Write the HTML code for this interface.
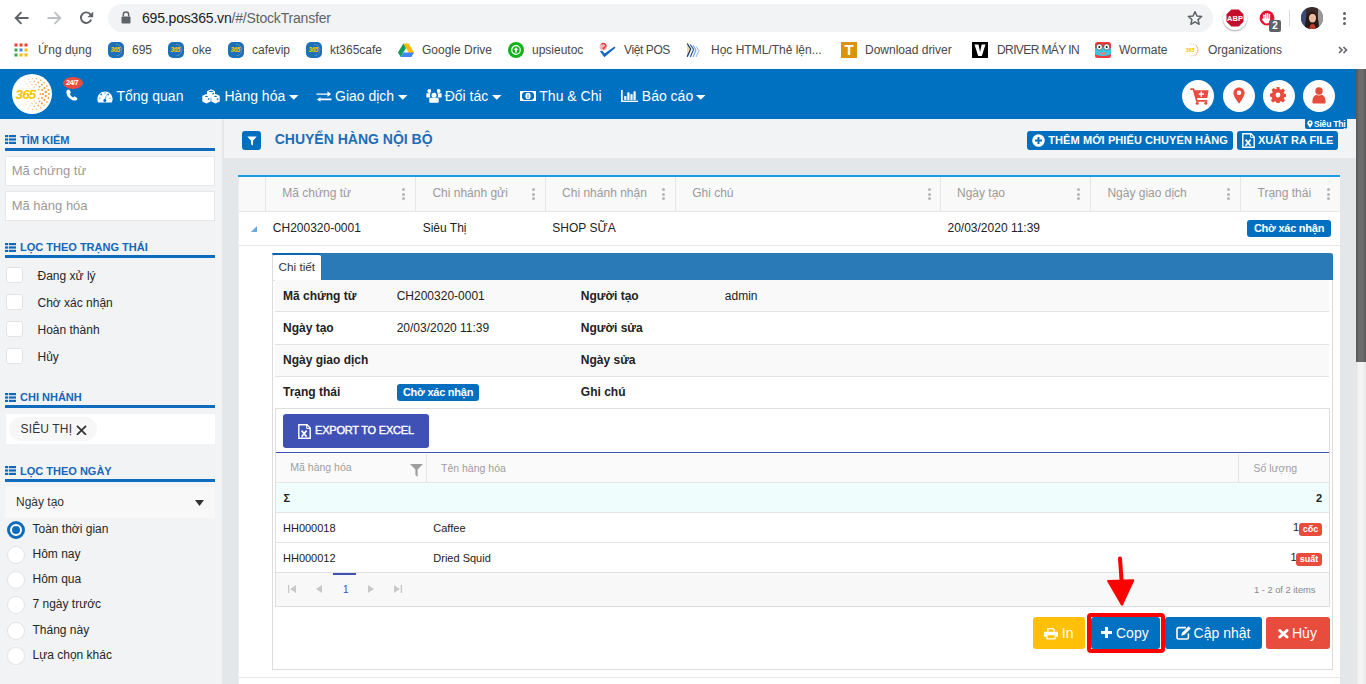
<!DOCTYPE html>
<html><head><meta charset="utf-8">
<style>
*{box-sizing:border-box;margin:0;padding:0}
html,body{width:1366px;height:684px;overflow:hidden;background:#fff;font-family:"Liberation Sans",sans-serif;color:#222}
.a{position:absolute}
.t{position:absolute;white-space:nowrap;line-height:1}
svg{display:block}
.nv{top:89px;font-size:14px;color:#fff}
.sh{left:20px;font-size:11px;font-weight:bold;color:#1567b8}
.inp{left:5px;width:210px;height:30px;background:#fff;border:1px solid #e8e8e8}
.chk{left:6px;width:17px;height:16px;border-radius:3px;background:#fff;border:1px solid #e3e3e3}
.sl{font-size:12px;color:#262626}
.keb{width:3px;height:3px;border-radius:2px;background:#b5b5b5}
.th{top:186.5px;font-size:12px;color:#9a9a9a}
.dt{font-size:12px;color:#222}
.bdg{background:#006fbf;color:#fff;font-size:11px;font-weight:bold;text-align:center;line-height:17px;border-radius:3px;white-space:nowrap;letter-spacing:-0.25px}
.lb{font-size:12px;font-weight:bold;color:#222}
.gh{font-size:10.5px;color:#9e9e9e}
.gd{font-size:11px;color:#222}
.rb{background:#e74c3c;color:#fff;font-size:9px;font-weight:bold;text-align:center;line-height:13px;border-radius:3px}
.btn{top:617px;height:32px;border-radius:3px}
.bt{top:626px;font-size:14px;color:#fff}
.bm{top:44px;font-size:12px;color:#474747}
</style></head><body>
<!-- ===== Browser chrome ===== -->
<div class="a" style="left:0;top:0;width:1366px;height:69px;background:#fff"></div>
<!-- back -->
<svg class="a" style="left:14px;top:11px" width="15" height="14" viewBox="0 0 15 14"><path d="M14.5 7H2M7.5 1.2L1.7 7l5.8 5.8" fill="none" stroke="#5f6368" stroke-width="1.9"/></svg>
<!-- fwd -->
<svg class="a" style="left:47px;top:11px" width="15" height="14" viewBox="0 0 15 14"><path d="M0.5 7H13M7.5 1.2L13.3 7l-5.8 5.8" fill="none" stroke="#bdc1c6" stroke-width="1.9"/></svg>
<!-- reload -->
<svg class="a" style="left:79px;top:11px" width="15" height="14" viewBox="0 0 15 14"><path d="M12.2 8.6A5.3 5.3 0 1 1 11.6 3.6" fill="none" stroke="#5f6368" stroke-width="1.9"/><path d="M14.2 0.5v5.8H8.4z" fill="#5f6368"/></svg>
<div class="a" style="left:108px;top:4px;width:1105px;height:28px;border-radius:14px;background:#f1f3f4"></div>
<!-- lock -->
<svg class="a" style="left:121px;top:11px" width="10" height="13" viewBox="0 0 10 13"><path d="M2.3 5.5V3.8a2.7 2.7 0 0 1 5.4 0v1.7" fill="none" stroke="#5f6368" stroke-width="1.5"/><rect x="0.5" y="5.5" width="9" height="7" rx="1" fill="#5f6368"/></svg>
<div class="t" style="left:142px;top:11px;font-size:14px;letter-spacing:-0.18px;color:#202124">695.pos365.vn<span style="color:#5f6368">/#/StockTransfer</span></div>
<!-- star -->
<svg class="a" style="left:1187px;top:10px" width="16" height="16" viewBox="0 0 24 24"><path d="M12 2.5l2.9 6.6 7.1.6-5.4 4.7 1.6 7-6.2-3.7-6.2 3.7 1.6-7L2 9.7l7.1-.6z" fill="none" stroke="#5f6368" stroke-width="2.2" stroke-linejoin="round"/></svg>
<!-- ABP -->
<div class="a" style="left:1223px;top:6px;width:24px;height:24px;border-radius:12px;background:#fff;box-shadow:0 1px 2px rgba(0,0,0,.35)"></div>
<svg class="a" style="left:1226px;top:9px" width="18" height="18" viewBox="0 0 18 18"><path d="M5.3 0.5h7.4l4.8 4.8v7.4l-4.8 4.8H5.3L0.5 12.7V5.3z" fill="#c70d2c"/><text x="9" y="12.3" font-family="Liberation Sans" font-weight="bold" font-size="7.5" fill="#fff" text-anchor="middle">ABP</text></svg>
<!-- hand ext -->
<svg class="a" style="left:1259px;top:10px" width="16" height="16" viewBox="0 0 16 16"><circle cx="8" cy="8" r="7.4" fill="#e8112d"/><g fill="#fff"><rect x="4.2" y="4.6" width="1.5" height="5" rx=".75"/><rect x="6" y="3.2" width="1.5" height="6" rx=".75"/><rect x="7.8" y="3" width="1.5" height="6" rx=".75"/><rect x="9.6" y="3.8" width="1.5" height="5.5" rx=".75"/><path d="M4.2 8.5h6.9v1.8c0 1.9-1.4 3.3-3.3 3.3-1.3 0-2.1-.6-2.8-1.6L3.3 9.9c-.4-.6-.2-1.2.3-1.4z"/></g></svg>
<div class="a" style="left:1269px;top:20px;width:12px;height:12px;border-radius:2px;background:#5f6368;color:#fff;font-size:10px;font-weight:bold;line-height:12px;text-align:center">2</div>
<div class="a" style="left:1289px;top:10px;width:1px;height:16px;background:#dadce0"></div>
<!-- avatar -->
<svg class="a" style="left:1301px;top:7px" width="22" height="22" viewBox="0 0 22 22"><defs><clipPath id="av"><circle cx="11" cy="11" r="11"/></clipPath></defs><g clip-path="url(#av)"><rect width="22" height="22" fill="#3a2a2a"/><rect x="0" y="0" width="5" height="22" fill="#3c4a7a"/><rect x="17" y="0" width="5" height="22" fill="#9a9a9a"/><path d="M4 22c0-9 2-17 7-17s7 8 7 17z" fill="#2a1812"/><ellipse cx="11.5" cy="11" rx="3.6" ry="4.6" fill="#e9b9a0"/><path d="M8 22c.5-3 1.5-5 3.5-5s3 2 3.5 5z" fill="#c0392b"/><path d="M7.5 9c.5-3 2-4.5 4-4.5s3.5 1.5 4 4.5c-1-1.5-2.5-2.2-4-2.2s-3 .7-4 2.2z" fill="#2a1812"/></g></svg>
<!-- kebab -->
<div class="a" style="left:1343px;top:12px;width:3px;height:3px;border-radius:2px;background:#5f6368"></div>
<div class="a" style="left:1343px;top:17px;width:3px;height:3px;border-radius:2px;background:#5f6368"></div>
<div class="a" style="left:1343px;top:22px;width:3px;height:3px;border-radius:2px;background:#5f6368"></div>

<!-- bookmarks -->
<svg class="a" style="left:14px;top:43px" width="14" height="14" viewBox="0 0 14 14">
<rect x="0.5" y="0.5" width="3" height="3" fill="#ea4335"/><rect x="5.5" y="0.5" width="3" height="3" fill="#ea4335"/><rect x="10.5" y="0.5" width="3" height="3" fill="#ea4335"/>
<rect x="0.5" y="5.5" width="3" height="3" fill="#34a853"/><rect x="5.5" y="5.5" width="3" height="3" fill="#4285f4"/><rect x="10.5" y="5.5" width="3" height="3" fill="#fbbc05"/>
<rect x="0.5" y="10.5" width="3" height="3" fill="#34a853"/><rect x="5.5" y="10.5" width="3" height="3" fill="#fbbc05"/><rect x="10.5" y="10.5" width="3" height="3" fill="#fbbc05"/></svg>
<div class="t bm" style="left:38px">Ứng dụng</div>
<svg class="a" style="left:108px;top:42px" width="16" height="16" viewBox="0 0 16 16"><rect width="16" height="16" rx="5" fill="#1d6fb8"/><path d="M8 2.2A5.8 5.8 0 0 1 8 13.8" fill="none" stroke="#8fb4c8" stroke-width=".8" stroke-dasharray="1 .6"/><text x="7.2" y="10.3" font-family="Liberation Sans" font-weight="bold" font-style="italic" font-size="6.5" fill="#f5c800" text-anchor="middle" letter-spacing="-.5">365</text></svg>
<div class="t bm" style="left:132px">695</div>
<svg class="a" style="left:168px;top:42px" width="16" height="16" viewBox="0 0 16 16"><rect width="16" height="16" rx="5" fill="#1d6fb8"/><path d="M8 2.2A5.8 5.8 0 0 1 8 13.8" fill="none" stroke="#8fb4c8" stroke-width=".8" stroke-dasharray="1 .6"/><text x="7.2" y="10.3" font-family="Liberation Sans" font-weight="bold" font-style="italic" font-size="6.5" fill="#f5c800" text-anchor="middle" letter-spacing="-.5">365</text></svg>
<div class="t bm" style="left:192px">oke</div>
<svg class="a" style="left:228px;top:42px" width="16" height="16" viewBox="0 0 16 16"><rect width="16" height="16" rx="5" fill="#1d6fb8"/><path d="M8 2.2A5.8 5.8 0 0 1 8 13.8" fill="none" stroke="#8fb4c8" stroke-width=".8" stroke-dasharray="1 .6"/><text x="7.2" y="10.3" font-family="Liberation Sans" font-weight="bold" font-style="italic" font-size="6.5" fill="#f5c800" text-anchor="middle" letter-spacing="-.5">365</text></svg>
<div class="t bm" style="left:252px">cafevip</div>
<svg class="a" style="left:306px;top:42px" width="16" height="16" viewBox="0 0 16 16"><rect width="16" height="16" rx="5" fill="#1d6fb8"/><path d="M8 2.2A5.8 5.8 0 0 1 8 13.8" fill="none" stroke="#8fb4c8" stroke-width=".8" stroke-dasharray="1 .6"/><text x="7.2" y="10.3" font-family="Liberation Sans" font-weight="bold" font-style="italic" font-size="6.5" fill="#f5c800" text-anchor="middle" letter-spacing="-.5">365</text></svg>
<div class="t bm" style="left:330px">kt365cafe</div>
<svg class="a" style="left:398px;top:43px" width="16" height="14" viewBox="0 0 16 14"><path d="M5.3 0.5h5.4L16 9.5l-2.7 4.5z" fill="#ffba00"/><path d="M5.3 0.5L0 9.5l2.7 4.5L8 5z" fill="#0f9d58"/><path d="M2.7 14h10.6L16 9.5H5.4z" fill="#4285f4"/></svg>
<div class="t bm" style="left:422px">Google Drive</div>
<div class="a" style="left:508px;top:42px;width:16px;height:16px;border-radius:8px;background:#13b21c"></div>
<svg class="a" style="left:511px;top:45px" width="10" height="10" viewBox="0 0 10 10"><circle cx="5" cy="5" r="4.3" fill="none" stroke="#fff" stroke-width="1.2"/><path d="M5 2.2L2.6 4.8h1.5v2.8h1.8V4.8h1.5z" fill="#fff"/></svg>
<div class="t bm" style="left:532px">upsieutoc</div>
<svg class="a" style="left:599px;top:42px" width="17" height="16" viewBox="0 0 17 16"><circle cx="4.3" cy="4.5" r="3.8" fill="#f2b8bf"/><path d="M2.5 2.2c1.2-1 3-.9 3.9.3.6.9.3 2.2-.7 2.7l-1.6.9 1.3 1.2" fill="none" stroke="#e53935" stroke-width="1.3"/><path d="M1 9.2l4.3 6 11.2-9.5-1-1.2L5.6 11.5 3 8.5z" fill="#1565c0"/></svg>
<div class="t bm" style="left:624px;letter-spacing:-0.4px">Việt POS</div>
<svg class="a" style="left:686px;top:42px" width="17" height="16" viewBox="0 0 17 16"><path d="M7 3.5l3 4.5-3 7" fill="none" stroke="#6d9fd8" stroke-width="1.1"/><path d="M4.3 2.5l3.3 5-3.3 7.5" fill="none" stroke="#2d5a9a" stroke-width="1.2"/><path d="M1.2 1.5l3.5 5.5-3.5 7.8L.8 7z" fill="#e8dcb0"/><path d="M1.2 1.5l3.5 5.5-3.5 7.8" fill="none" stroke="#22375e" stroke-width="1.3"/><path d="M10 4.5l3 4-3 6.5" fill="none" stroke="#8ab8e8" stroke-width="1"/></svg>
<div class="t bm" style="left:711px">Học HTML/Thẻ lện...</div>
<div class="a" style="left:841px;top:42px;width:16px;height:16px;background:#d9930f;color:#fff;font-weight:bold;font-size:15px;line-height:16px;text-align:center">T</div>
<div class="t bm" style="left:865px">Download driver</div>
<svg class="a" style="left:972px;top:42px" width="16" height="16" viewBox="0 0 16 16"><rect width="16" height="16" fill="#000"/><path d="M2.5 2.5h4l1.6 7.5 1.6-7.5h3.8L9.8 14H6.2z" fill="#fff"/></svg>
<div class="t bm" style="left:997px;letter-spacing:-0.6px">DRIVER MÁY IN</div>
<svg class="a" style="left:1095px;top:42px" width="16" height="16" viewBox="0 0 16 16"><rect width="16" height="16" rx="2.5" fill="#ef3b3b"/><path d="M0 6.5c2-1 5-1.5 8-1.5s6 .5 8 1.5V12c-2 1.5-5 2-8 2s-6-.5-8-2z" fill="#3cc5dc"/><circle cx="4.3" cy="5" r="3" fill="#fff" stroke="#222" stroke-width=".5"/><circle cx="11.7" cy="5" r="3" fill="#fff" stroke="#222" stroke-width=".5"/><circle cx="4.3" cy="5" r="1" fill="#111"/><circle cx="11.7" cy="5" r="1" fill="#111"/><path d="M4.5 10.5c1 1.8 2.2 2.5 3.5 2.5s2.5-.7 3.5-2.5z" fill="#f07a8a"/></svg>
<div class="t bm" style="left:1119px">Wormate</div>
<svg class="a" style="left:1184px;top:42px" width="16" height="16" viewBox="0 0 16 16"><g fill="#f4a460" opacity=".8"><circle cx="5.9" cy="2.4" r="0.40"/><circle cx="7.7" cy="2.0" r="0.48"/><circle cx="9.4" cy="2.2" r="0.57"/><circle cx="11.1" cy="2.8" r="0.65"/><circle cx="12.4" cy="4.0" r="0.72"/><circle cx="13.4" cy="5.4" r="0.77"/><circle cx="13.9" cy="7.1" r="0.80"/><circle cx="13.9" cy="8.9" r="0.80"/><circle cx="13.4" cy="10.6" r="0.77"/><circle cx="12.4" cy="12.0" r="0.72"/><circle cx="11.1" cy="13.2" r="0.65"/><circle cx="9.4" cy="13.8" r="0.57"/><circle cx="7.7" cy="14.0" r="0.48"/><circle cx="5.9" cy="13.6" r="0.40"/></g><text x="6" y="10" font-family="Liberation Sans" font-weight="bold" font-style="italic" font-size="5.5" fill="#f5c400" text-anchor="middle">365</text></svg>
<div class="t bm" style="left:1208px">Organizations</div>
<svg class="a" style="left:1338px;top:46px" width="10" height="8" viewBox="0 0 10 8"><path d="M1 1l3 3-3 3M5.5 1l3 3-3 3" fill="none" stroke="#5f6368" stroke-width="1.6"/></svg>


<!-- ===== App nav ===== -->
<div class="a" style="left:0;top:69px;width:1356px;height:50px;background:#0070c0"></div>
<!-- logo -->
<div class="a" style="left:12px;top:73.5px;width:40px;height:40px;border-radius:20px;background:#fff"></div>
<svg class="a" style="left:12px;top:73.5px" width="40" height="40" viewBox="0 0 40 40">
<g fill="#f7931e"><circle cx="12.6" cy="7.3" r="0.46" opacity="0.49"/><circle cx="16.4" cy="5.4" r="0.53" opacity="0.57"/><circle cx="20.5" cy="4.5" r="0.60" opacity="0.65"/><circle cx="24.7" cy="4.8" r="0.68" opacity="0.74"/><circle cx="28.7" cy="6.3" r="0.75" opacity="0.83"/><circle cx="32.1" cy="8.7" r="0.81" opacity="0.90"/><circle cx="34.8" cy="12.0" r="0.86" opacity="0.95"/><circle cx="36.4" cy="15.8" r="0.89" opacity="0.99"/><circle cx="37.0" cy="20.0" r="0.90" opacity="1.00"/><circle cx="36.4" cy="24.2" r="0.89" opacity="0.99"/><circle cx="34.8" cy="28.0" r="0.86" opacity="0.95"/><circle cx="32.1" cy="31.3" r="0.81" opacity="0.90"/><circle cx="28.7" cy="33.7" r="0.75" opacity="0.83"/><circle cx="24.7" cy="35.2" r="0.68" opacity="0.74"/><circle cx="20.5" cy="35.5" r="0.60" opacity="0.65"/><circle cx="16.4" cy="34.6" r="0.53" opacity="0.57"/><circle cx="12.6" cy="32.7" r="0.46" opacity="0.49"/><circle cx="14.3" cy="9.8" r="0.58" opacity="0.49"/><circle cx="18.1" cy="8.0" r="0.69" opacity="0.59"/><circle cx="22.3" cy="7.5" r="0.81" opacity="0.69"/><circle cx="26.3" cy="8.5" r="0.92" opacity="0.80"/><circle cx="29.9" cy="10.7" r="1.02" opacity="0.89"/><circle cx="32.4" cy="14.0" r="1.10" opacity="0.96"/><circle cx="33.8" cy="17.9" r="1.13" opacity="1.00"/><circle cx="33.8" cy="22.1" r="1.13" opacity="1.00"/><circle cx="32.4" cy="26.0" r="1.10" opacity="0.96"/><circle cx="29.9" cy="29.3" r="1.02" opacity="0.89"/><circle cx="26.3" cy="31.5" r="0.92" opacity="0.80"/><circle cx="22.3" cy="32.5" r="0.81" opacity="0.69"/><circle cx="18.1" cy="32.0" r="0.69" opacity="0.59"/><circle cx="14.3" cy="30.2" r="0.58" opacity="0.49"/><circle cx="16.1" cy="12.2" r="0.52" opacity="0.49"/><circle cx="19.9" cy="10.6" r="0.65" opacity="0.62"/><circle cx="24.0" cy="10.8" r="0.78" opacity="0.76"/><circle cx="27.6" cy="12.7" r="0.91" opacity="0.88"/><circle cx="30.1" cy="16.0" r="0.99" opacity="0.97"/><circle cx="31.0" cy="20.0" r="1.02" opacity="1.00"/><circle cx="30.1" cy="24.0" r="0.99" opacity="0.97"/><circle cx="27.6" cy="27.3" r="0.91" opacity="0.88"/><circle cx="24.0" cy="29.2" r="0.78" opacity="0.76"/><circle cx="19.9" cy="29.4" r="0.65" opacity="0.62"/><circle cx="16.1" cy="27.8" r="0.52" opacity="0.49"/><circle cx="17.6" cy="14.4" r="0.43" opacity="0.49"/><circle cx="22.3" cy="13.2" r="0.61" opacity="0.71"/><circle cx="26.6" cy="15.5" r="0.77" opacity="0.92"/><circle cx="28.3" cy="20.0" r="0.84" opacity="1.00"/><circle cx="26.6" cy="24.5" r="0.77" opacity="0.92"/><circle cx="22.3" cy="26.8" r="0.61" opacity="0.71"/><circle cx="17.6" cy="25.6" r="0.43" opacity="0.49"/></g>
<text x="13.5" y="25" font-family="Liberation Sans" font-weight="bold" font-style="italic" font-size="13.5" fill="#f6c500" text-anchor="middle" letter-spacing="-0.8">365</text>
</svg>
<!-- 24/7 + phone -->
<div class="a" style="left:63px;top:77px;width:20px;height:12px;border-radius:50%;background:#e74c3c"></div>
<div class="t" style="left:66px;top:79.3px;font-size:7.3px;font-weight:bold;color:#fff;letter-spacing:-0.55px">24/7</div>
<svg class="a" style="left:66px;top:89px" width="13" height="12" viewBox="0 0 13 12"><path d="M2.2 0.6c.6-.3 1-.1 1.3.4l1.2 2c.3.5.2.9-.2 1.2l-.8.6c.6 1.5 1.9 3 3.5 3.7l.7-.8c.4-.4.8-.4 1.2-.1l1.9 1.3c.5.3.6.8.3 1.3-.5.9-1.3 1.5-2.3 1.4C4.4 11.2.3 6.9.4 2.9.5 1.9 1.2 1.1 2.2.6z" fill="#fff"/></svg>
<!-- items -->
<svg class="a" style="left:97px;top:90.5px" width="16" height="12" viewBox="0 0 16 12"><path d="M8 0.4C3.8 0.4 0.4 3.8 0.4 8c0 1.4.3 2.6.9 3.6h13.4c.6-1 .9-2.2.9-3.6C15.6 3.8 12.2 .4 8 .4z" fill="#fff"/><g fill="#0070c0"><circle cx="4.2" cy="3.4" r=".9"/><circle cx="11.2" cy="3.4" r=".9"/><rect x="7.3" y="1.3" width="1.4" height="1.4" opacity=".5"/><rect x="2" y="6.6" width="1.4" height="1.4" opacity=".5"/><rect x="12.4" y="6.6" width="1.4" height="1.4" opacity=".5"/><circle cx="7.8" cy="9.4" r="1.5"/><path d="M7.2 9L9.3 3.8l.5.2L8.5 9.4z" opacity=".6"/></g></svg>
<div class="t nv" style="left:116.5px">Tổng quan</div>
<svg class="a" style="left:202px;top:88.5px" width="18" height="15" viewBox="0 0 18 15"><g fill="#fff"><path d="M5 2.2L9 0.3l4 1.9v4.6L9 8.7 5 6.8z"/><path d="M0.3 6.8l4-1.9 4.4 2.1v5.6l-4.2 2-4.2-2z"/><path d="M9.3 7l4.4-2.1 4 1.9v5.7l-4.2 2-4.2-2z"/></g><g fill="#0070c0"><ellipse cx="9" cy="2.3" rx="2.3" ry=".6"/><ellipse cx="4.5" cy="7.3" rx="1.6" ry=".6"/><ellipse cx="13.5" cy="7.3" rx="1.6" ry=".6"/><path d="M10.5 4.2l1.5-.7v1.4l-1.5.8z"/><path d="M5.8 9.8l1.5-.7v1.4l-1.5.8zM14.8 9.8l1.5-.7v1.4l-1.5.8z"/></g></svg>
<div class="t nv" style="left:224.5px">Hàng hóa</div>
<svg class="a" style="left:288.5px;top:95px" width="10" height="5" viewBox="0 0 10 5"><path d="M0 0h9.5L4.75 4.8z" fill="#fff"/></svg>
<svg class="a" style="left:316px;top:91px" width="16" height="11" viewBox="0 0 16 11"><g fill="#fff"><path d="M0.5 2.4h11V1.2h0V0.2l3.6 2.8-3.6 2.8V3.8H.5z"/><path d="M15.5 7.6h-11V6.2L.9 8.4l3.6 2.4V9.2h11z"/></g></svg>
<div class="t nv" style="left:335px">Giao dịch</div>
<svg class="a" style="left:397.8px;top:95px" width="10" height="5" viewBox="0 0 10 5"><path d="M0 0h9.5L4.75 4.8z" fill="#fff"/></svg>
<svg class="a" style="left:425.5px;top:89px" width="16" height="14" viewBox="0 0 16 14"><g fill="#fff"><circle cx="3.3" cy="2" r="1.9"/><circle cx="12.7" cy="2" r="1.9"/><path d="M.4 4.3h4.4c-.6.6-.9 1.4-.9 2.3 0 .7.2 1.3.6 1.9H.4z"/><path d="M15.6 4.3h-4.4c.6.6.9 1.4.9 2.3 0 .7-.2 1.3-.6 1.9h4.1z"/><circle cx="8" cy="6.2" r="2.5"/><path d="M3.3 9.2h9.4v3.6c0 .6-.4 1-1 1H4.3c-.6 0-1-.4-1-1z" /><path d="M3.3 10.5c.3-1.1 1.3-1.7 2.4-1.7h4.6c1.1 0 2.1.6 2.4 1.7z"/></g></svg>
<div class="t nv" style="left:444.7px">Đối tác</div>
<svg class="a" style="left:492.3px;top:95px" width="10" height="5" viewBox="0 0 10 5"><path d="M0 0h9.5L4.75 4.8z" fill="#fff"/></svg>
<svg class="a" style="left:520px;top:91px" width="16" height="10" viewBox="0 0 16 10"><path d="M0 0h16v10H0z" fill="#fff"/><path d="M4 1h8l2 2v4l-2 2H4L2 7V3z" fill="#0070c0"/><ellipse cx="8" cy="5" rx="2.6" ry="3.3" fill="#fff"/><path d="M7.4 3.2h1.2v2.8h.5v.8H6.9V6h.5z" fill="#0070c0" opacity=".7"/></svg>
<div class="t nv" style="left:539.3px">Thu &amp; Chi</div>
<svg class="a" style="left:621px;top:90px" width="17" height="12" viewBox="0 0 17 12"><g fill="#fff"><rect x="0" y="0" width="1.7" height="12"/><rect x="0" y="10.6" width="17" height="1.4"/><rect x="3.2" y="6.1" width="2.2" height="3.8"/><rect x="6.3" y="2.4" width="2.2" height="7.5"/><rect x="9.4" y="4.2" width="2.2" height="5.7"/><rect x="12.5" y="1.3" width="2.2" height="8.6"/></g></svg>
<div class="t nv" style="left:641.8px">Báo cáo</div>
<svg class="a" style="left:696px;top:95px" width="10" height="5" viewBox="0 0 10 5"><path d="M0 0h9.5L4.75 4.8z" fill="#fff"/></svg>
<!-- right icons -->
<div class="a" style="left:1182px;top:80px;width:32px;height:32px;border-radius:16px;background:#fff"></div>
<div class="a" style="left:1222.5px;top:80px;width:32px;height:32px;border-radius:16px;background:#fff"></div>
<div class="a" style="left:1262.5px;top:80px;width:32px;height:32px;border-radius:16px;background:#fff"></div>
<div class="a" style="left:1302.8px;top:80px;width:32px;height:32px;border-radius:16px;background:#fff"></div>
<svg class="a" style="left:1189.5px;top:87.5px" width="19" height="17" viewBox="0 0 19 17"><path d="M0.3 1.2h3.2l3.3 11.6h10.5" fill="none" stroke="#e74c3c" stroke-width="1.7"/><path d="M3.9 2.3H18.5l-1.2 7.6H6z" fill="#e74c3c"/><path d="M11.3 3.5v5.2M8.7 6.1h5.2" stroke="#fff" stroke-width="1.5"/><circle cx="7.2" cy="15.3" r="1.5" fill="#e74c3c"/><circle cx="15.8" cy="15.3" r="1.5" fill="#e74c3c"/></svg>
<svg class="a" style="left:1233px;top:87px" width="12" height="17" viewBox="0 0 12 17"><path d="M6 .4C2.9.4.4 2.8.4 5.9c0 3.5 5.6 10.7 5.6 10.7s5.6-7.2 5.6-10.7C11.6 2.8 9.1.4 6 .4z" fill="#e74c3c"/><circle cx="6" cy="5.8" r="2.3" fill="#fff"/></svg>
<svg class="a" style="left:1270.2px;top:87.3px" width="16" height="16" viewBox="0 0 16 16"><path d="M6.6 0h2.8l.4 2.2 1.3.6 1.9-1.3 2 2-1.3 1.9.6 1.3 2.2.4v2.8l-2.2.4-.6 1.3 1.3 1.9-2 2-1.9-1.3-1.3.6-.4 2.2H6.6l-.4-2.2-1.3-.6-1.9 1.3-2-2 1.3-1.9-.6-1.3L0 9.4V6.6l2.2-.4.6-1.3L1.5 3l2-2 1.9 1.3 1.3-.6z" fill="#e74c3c"/><circle cx="8" cy="8" r="2.4" fill="#fff"/></svg>
<svg class="a" style="left:1312.3px;top:86.5px" width="14" height="17" viewBox="0 0 14 17"><circle cx="7" cy="4" r="3.7" fill="#e74c3c"/><path d="M.4 14c0-3.4 2-5.8 4-6.3.8.5 1.6.8 2.6.8s1.8-.3 2.6-.8c2 .5 4 2.9 4 6.3v1.2c0 .8-.6 1.4-1.4 1.4H1.8c-.8 0-1.4-.6-1.4-1.4z" fill="#e74c3c"/></svg>

<!-- ===== Sidebar ===== -->
<div class="a" style="left:0;top:119px;width:222px;height:565px;background:#f2f3f5"></div>
<svg class="a" style="left:5px;top:135.4px" width="11" height="9" viewBox="0 0 11 9"><g fill="#1567b8"><rect x="0" y="0" width="3.2" height="2.2"/><rect x="4" y="0" width="7" height="2.2"/><rect x="0" y="3.4" width="3.2" height="2.2"/><rect x="4" y="3.4" width="7" height="2.2"/><rect x="0" y="6.8" width="3.2" height="2.2"/><rect x="4" y="6.8" width="7" height="2.2"/></g></svg><div class="t sh" style="top:134.5px">TÌM KIẾM</div>
<div class="a" style="left:5px;top:148px;width:210px;height:3px;background:#0f6cbd"></div>
<div class="a inp" style="top:156px"><div class="t" style="left:5.7px;top:7.2px;font-size:13px;color:#9a9a9a">Mã chứng từ</div></div>
<div class="a inp" style="top:191px"><div class="t" style="left:5.7px;top:7.2px;font-size:13px;color:#9a9a9a">Mã hàng hóa</div></div>
<svg class="a" style="left:5px;top:242.9px" width="11" height="9" viewBox="0 0 11 9"><g fill="#1567b8"><rect x="0" y="0" width="3.2" height="2.2"/><rect x="4" y="0" width="7" height="2.2"/><rect x="0" y="3.4" width="3.2" height="2.2"/><rect x="4" y="3.4" width="7" height="2.2"/><rect x="0" y="6.8" width="3.2" height="2.2"/><rect x="4" y="6.8" width="7" height="2.2"/></g></svg><div class="t sh" style="top:242.0px">LỌC THEO TRẠNG THÁI</div>
<div class="a" style="left:5px;top:255px;width:210px;height:3px;background:#0f6cbd"></div>
<div class="a chk" style="top:266.5px"></div><div class="t sl" style="left:37.5px;top:270.0px">Đang xử lý</div>
<div class="a chk" style="top:293.5px"></div><div class="t sl" style="left:37.5px;top:297.0px">Chờ xác nhận</div>
<div class="a chk" style="top:320.5px"></div><div class="t sl" style="left:37.5px;top:324.0px">Hoàn thành</div>
<div class="a chk" style="top:347.5px"></div><div class="t sl" style="left:37.5px;top:351.0px">Hủy</div>
<svg class="a" style="left:5px;top:392.9px" width="11" height="9" viewBox="0 0 11 9"><g fill="#1567b8"><rect x="0" y="0" width="3.2" height="2.2"/><rect x="4" y="0" width="7" height="2.2"/><rect x="0" y="3.4" width="3.2" height="2.2"/><rect x="4" y="3.4" width="7" height="2.2"/><rect x="0" y="6.8" width="3.2" height="2.2"/><rect x="4" y="6.8" width="7" height="2.2"/></g></svg><div class="t sh" style="top:392.0px">CHI NHÁNH</div>
<div class="a" style="left:5px;top:404.5px;width:210px;height:3px;background:#0f6cbd"></div>
<div class="a" style="left:6px;top:414px;width:209px;height:30px;background:#fff"></div>
<div class="a" style="left:9px;top:417px;width:88px;height:24px;border-radius:12px;background:#f7f7f8"></div>
<div class="t" style="left:20.5px;top:422.5px;font-size:12px;color:#333;letter-spacing:0.15px">SIÊU THỊ</div>
<svg class="a" style="left:75.5px;top:424.8px" width="11" height="10.5" viewBox="0 0 11 10.5"><path d="M1 .8l9 9M10 .8l-9 9" stroke="#333" stroke-width="1.8"/></svg>
<svg class="a" style="left:5px;top:466.4px" width="11" height="9" viewBox="0 0 11 9"><g fill="#1567b8"><rect x="0" y="0" width="3.2" height="2.2"/><rect x="4" y="0" width="7" height="2.2"/><rect x="0" y="3.4" width="3.2" height="2.2"/><rect x="4" y="3.4" width="7" height="2.2"/><rect x="0" y="6.8" width="3.2" height="2.2"/><rect x="4" y="6.8" width="7" height="2.2"/></g></svg><div class="t sh" style="top:465.5px">LỌC THEO NGÀY</div>
<div class="a" style="left:5px;top:478.5px;width:210px;height:3px;background:#0f6cbd"></div>
<div class="a" style="left:5px;top:487px;width:210px;height:31px;background:#f8f8f8"></div>
<div class="t" style="left:16px;top:496px;font-size:12px;color:#333">Ngày tạo</div>
<svg class="a" style="left:195px;top:499.5px" width="9" height="6" viewBox="0 0 9 6"><path d="M0 0h9L4.5 6z" fill="#333"/></svg>
<div class="a" style="left:7px;top:521.0px;width:18px;height:18px;border-radius:9px;border:3px solid #0f6cbd;background:#fff"><div class="a" style="left:2px;top:2px;width:8px;height:8px;border-radius:4px;background:#0f6cbd"></div></div><div class="t sl" style="left:32.5px;top:523.0px">Toàn thời gian</div>
<div class="a" style="left:7px;top:546.0px;width:18px;height:18px;border-radius:9px;border:1.5px solid #e4e4e4;background:#fff"></div><div class="t sl" style="left:32.5px;top:548.0px">Hôm nay</div>
<div class="a" style="left:7px;top:571.0px;width:18px;height:18px;border-radius:9px;border:1.5px solid #e4e4e4;background:#fff"></div><div class="t sl" style="left:32.5px;top:573.0px">Hôm qua</div>
<div class="a" style="left:7px;top:596.3px;width:18px;height:18px;border-radius:9px;border:1.5px solid #e4e4e4;background:#fff"></div><div class="t sl" style="left:32.5px;top:598.3px">7 ngày trước</div>
<div class="a" style="left:7px;top:621.5px;width:18px;height:18px;border-radius:9px;border:1.5px solid #e4e4e4;background:#fff"></div><div class="t sl" style="left:32.5px;top:623.5px">Tháng này</div>
<div class="a" style="left:7px;top:646.6px;width:18px;height:18px;border-radius:9px;border:1.5px solid #e4e4e4;background:#fff"></div><div class="t sl" style="left:32.5px;top:648.6px">Lựa chọn khác</div>
<!-- gutter -->
<div class="a" style="left:222px;top:119px;width:1134px;height:565px;background:#e4e7ea"></div>
<!-- header bar -->
<div class="a" style="left:224px;top:119px;width:1132px;height:39px;background:#f2f3f5"></div>
<!-- main panel -->
<div class="a" style="left:238px;top:175px;width:1102px;height:509px;background:#fff;border-top:2px solid #1a9be6"></div>
<div class="a" style="left:238px;top:177px;width:1px;height:507px;background:#ececec"></div>
<!-- header bar content -->
<div class="a" style="left:242px;top:131px;width:19px;height:19px;border-radius:3px;background:#006fbf"></div>
<svg class="a" style="left:246.5px;top:135.5px" width="10" height="10" viewBox="0 0 10 10"><path d="M0.3 0.5h9.4L6 4.8v4.7L4 8.3V4.8z" fill="#fff"/></svg>
<div class="t" style="left:274.7px;top:131.6px;font-size:14px;font-weight:bold;color:#1c6db6">CHUYỂN HÀNG NỘI BỘ</div>
<div class="a" style="left:1305px;top:119px;width:42px;height:10px;border-radius:0 0 2px 2px;background:#006fbf"></div>
<svg class="a" style="left:1307px;top:120.3px" width="6" height="8" viewBox="0 0 6 8"><path d="M3 .2C1.5.2.3 1.4.3 2.9.3 4.6 3 7.8 3 7.8s2.7-3.2 2.7-4.9C5.7 1.4 4.5.2 3 .2z" fill="#fff"/><circle cx="3" cy="2.8" r="1" fill="#006fbf"/></svg>
<div class="t" style="left:1314px;top:119.7px;font-size:8.6px;font-weight:bold;color:#fff;letter-spacing:-0.25px">Siêu Thị</div>
<div class="a" style="left:1027px;top:131px;width:206px;height:18.5px;border-radius:3px;background:#006fbf"></div>
<svg class="a" style="left:1032px;top:134px" width="13" height="13" viewBox="0 0 13 13"><circle cx="6.5" cy="6.5" r="6.3" fill="#fff"/><path d="M6.5 3v7M3 6.5h7" stroke="#006fbf" stroke-width="2"/></svg>
<div class="t" style="left:1048.3px;top:134.5px;font-size:11px;font-weight:bold;color:#fff;letter-spacing:0.08px">THÊM MỚI PHIẾU CHUYỂN HÀNG</div>
<div class="a" style="left:1237px;top:131px;width:101px;height:18.5px;border-radius:3px;background:#006fbf"></div>
<svg class="a" style="left:1242px;top:133px" width="13" height="15" viewBox="0 0 13 15"><path d="M.8.8h8.2l3.2 3.2v10.2H.8z" fill="none" stroke="#fff" stroke-width="1.4"/><path d="M8.6.8v3.6h3.6" fill="none" stroke="#fff" stroke-width="1"/><path d="M3.6 6.6l5 6.2M8.6 6.6l-5 6.2" stroke="#fff" stroke-width="1.7"/></svg>
<div class="t" style="left:1258px;top:134.5px;font-size:11px;font-weight:bold;color:#fff">XUẤT RA FILE</div>

<!-- main grid header -->
<div class="a" style="left:239px;top:177px;width:1101px;height:35px;background:#f9f9f9;border-bottom:1px solid #e6e6e6"></div>
<div class="a" style="left:265.0px;top:177px;width:1px;height:35px;background:#e6e6e6"></div><div class="a" style="left:415.1px;top:177px;width:1px;height:35px;background:#e6e6e6"></div><div class="a" style="left:544.8px;top:177px;width:1px;height:35px;background:#e6e6e6"></div><div class="a" style="left:674.8px;top:177px;width:1px;height:35px;background:#e6e6e6"></div><div class="a" style="left:940.1px;top:177px;width:1px;height:35px;background:#e6e6e6"></div><div class="a" style="left:1090.0px;top:177px;width:1px;height:35px;background:#e6e6e6"></div><div class="a" style="left:1240.1px;top:177px;width:1px;height:35px;background:#e6e6e6"></div>
<div class="t th" style="left:282.3px">Mã chứng từ</div><div class="t th" style="left:432.4px">Chi nhánh gửi</div><div class="t th" style="left:562.1px">Chi nhánh nhận</div><div class="t th" style="left:692.2px">Ghi chú</div><div class="t th" style="left:957.0px">Ngày tạo</div><div class="t th" style="left:1107.4px">Ngày giao dịch</div><div class="t th" style="left:1257.5px">Trạng thái</div>
<div class="a keb" style="left:402.2px;top:188px"></div><div class="a keb" style="left:402.2px;top:192.5px"></div><div class="a keb" style="left:402.2px;top:197px"></div><div class="a keb" style="left:532.1px;top:188px"></div><div class="a keb" style="left:532.1px;top:192.5px"></div><div class="a keb" style="left:532.1px;top:197px"></div><div class="a keb" style="left:662.4px;top:188px"></div><div class="a keb" style="left:662.4px;top:192.5px"></div><div class="a keb" style="left:662.4px;top:197px"></div><div class="a keb" style="left:927.5px;top:188px"></div><div class="a keb" style="left:927.5px;top:192.5px"></div><div class="a keb" style="left:927.5px;top:197px"></div><div class="a keb" style="left:1077.3px;top:188px"></div><div class="a keb" style="left:1077.3px;top:192.5px"></div><div class="a keb" style="left:1077.3px;top:197px"></div><div class="a keb" style="left:1227.4px;top:188px"></div><div class="a keb" style="left:1227.4px;top:192.5px"></div><div class="a keb" style="left:1227.4px;top:197px"></div><div class="a keb" style="left:1327.3px;top:188px"></div><div class="a keb" style="left:1327.3px;top:192.5px"></div><div class="a keb" style="left:1327.3px;top:197px"></div>
<!-- row 1 -->
<div class="a" style="left:239px;top:245px;width:1101px;height:1px;background:#e6e6e6"></div>
<svg class="a" style="left:251px;top:226px" width="6" height="6" viewBox="0 0 6 6"><path d="M6 0v6H0z" fill="#6aa6d6"/></svg>
<div class="t dt" style="left:272.8px;top:221.5px">CH200320-0001</div>
<div class="t dt" style="left:422.7px;top:221.5px">Siêu Thị</div>
<div class="t dt" style="left:552.3px;top:221.5px">SHOP SỮA</div>
<div class="t dt" style="left:947.5px;top:221.5px">20/03/2020 11:39</div>
<div class="a bdg" style="left:1247px;top:220px;width:84px;height:17px">Chờ xác nhận</div>

<!-- ===== detail panel ===== -->
<div class="a" style="left:272px;top:253px;width:1061px;height:417px;border:1px solid #dcdcdc;border-top:0;background:#fff"></div>
<div class="a" style="left:272px;top:253px;width:1061px;height:27px;background:#2a7ab8;border-radius:0 3px 0 0"></div>
<div class="a" style="left:272px;top:253px;width:49px;height:28px;background:#fff;border-top:2px solid #0a66b5;border-left:1px solid #dcdcdc;border-bottom:1px solid #e0e0e0;border-radius:3px 3px 0 0"></div>
<div class="t" style="left:278.6px;top:260.9px;font-size:11.7px;color:#333">Chi tiết</div>
<!-- info rows -->
<div class="a" style="left:275px;top:280px;width:1054px;height:32px;background:#f9f9f9;border-bottom:1px solid #e3e3e3"></div>
<div class="a" style="left:275px;top:312px;width:1054px;height:32.5px;background:#fff;border-bottom:1px solid #e3e3e3"></div>
<div class="a" style="left:275px;top:344.5px;width:1054px;height:32px;background:#f9f9f9;border-bottom:1px solid #e3e3e3"></div>
<div class="a" style="left:275px;top:376.5px;width:1054px;height:32px;background:#fff"></div>
<div class="t lb" style="left:283px;top:289.5px">Mã chứng từ</div><div class="t dt" style="left:396.7px;top:289.5px">CH200320-0001</div>
<div class="t lb" style="left:580.8px;top:289.5px">Người tạo</div><div class="t dt" style="left:724.8px;top:289.5px">admin</div>
<div class="t lb" style="left:283px;top:321.5px">Ngày tạo</div><div class="t dt" style="left:396.7px;top:321.5px">20/03/2020 11:39</div>
<div class="t lb" style="left:580.8px;top:321.5px">Người sửa</div>
<div class="t lb" style="left:283px;top:353.5px">Ngày giao dịch</div>
<div class="t lb" style="left:580.8px;top:353.5px">Ngày sửa</div>
<div class="t lb" style="left:283px;top:385.5px">Trạng thái</div>
<div class="a bdg" style="left:397px;top:384px;width:82px;height:16.5px;line-height:16.5px">Chờ xác nhận</div>
<div class="t lb" style="left:580.8px;top:385.5px">Ghi chú</div>
<!-- grid container -->

<div class="a" style="left:283px;top:414px;width:146px;height:34px;border-radius:3px;background:#3f51b5"></div>
<svg class="a" style="left:297.5px;top:424px" width="13" height="15" viewBox="0 0 13 15"><path d="M.8.8h8.2l3.2 3.2v10.2H.8z" fill="none" stroke="#fff" stroke-width="1.4"/><path d="M8.6.8v3.6h3.6" fill="none" stroke="#fff" stroke-width="1"/><path d="M3.6 6.6l5 6.2M8.6 6.6l-5 6.2" stroke="#fff" stroke-width="1.7"/></svg>
<div class="t" style="left:315px;top:424.5px;font-size:11px;color:#fff;letter-spacing:-0.2px;-webkit-text-stroke:0.4px #fff">EXPORT TO EXCEL</div>
<div class="a" style="left:276px;top:451.8px;width:1053px;height:1.6px;background:#3f51b5"></div>
<div class="a" style="left:276px;top:454px;width:1053px;height:28.5px;background:#fafafa;border-bottom:1px solid #e5e5e5"></div>
<div class="a" style="left:426px;top:454px;width:1px;height:28px;background:#e5e5e5"></div>
<div class="a" style="left:1238px;top:454px;width:1px;height:28px;background:#e5e5e5"></div>
<div class="t gh" style="left:290.3px;top:462px">Mã hàng hóa</div>
<svg class="a" style="left:409.5px;top:463.5px" width="13" height="13" viewBox="0 0 13 13"><path d="M0 0h13L7.6 5.6V13L5.4 11V5.6z" fill="#9e9e9e"/></svg>
<div class="t gh" style="left:441px;top:463px">Tên hàng hóa</div>
<div class="t gh" style="left:1253.5px;top:463px">Số lượng</div>
<div class="a" style="left:276px;top:482.5px;width:1053px;height:30px;background:#effdfd;border-bottom:1px solid #e5e5e5"></div>
<div class="t gd" style="left:283.4px;top:492.5px;font-weight:bold">Σ</div>
<div class="t gd" style="left:1316px;top:492.5px;font-weight:bold">2</div>
<div class="a" style="left:276px;top:512.5px;width:1053px;height:30px;background:#fff;border-bottom:1px solid #e5e5e5"></div>
<div class="t gd" style="left:283px;top:522.5px">HH000018</div>
<div class="t gd" style="left:433.3px;top:522.5px">Caffee</div>
<div class="t gd" style="left:1293px;top:521.5px">1</div>
<div class="a rb" style="left:1299px;top:523px;width:23px;height:13px">cốc</div>
<div class="a" style="left:276px;top:542.5px;width:1053px;height:30px;background:#fff;border-bottom:1px solid #e0e0e0"></div>
<div class="t gd" style="left:283px;top:552.5px">HH000012</div>
<div class="t gd" style="left:433.3px;top:552.5px">Dried Squid</div>
<div class="t gd" style="left:1290.5px;top:551.5px">1</div>
<div class="a rb" style="left:1296px;top:553px;width:26px;height:13px">suất</div>
<!-- pager -->
<div class="a" style="left:276px;top:573px;width:1053px;height:33.5px;background:#f8f8f8"></div>
<div class="a" style="left:333px;top:573px;width:23px;height:2px;background:#3f51b5"></div>
<svg class="a" style="left:287.5px;top:585px" width="8" height="8" viewBox="0 0 8 8"><path d="M0 0h1.3v8H0zM8 0v8L2.2 4z" fill="#c8c8c8"/></svg>
<svg class="a" style="left:315.5px;top:585px" width="6" height="8" viewBox="0 0 6 8"><path d="M6 0v8L0 4z" fill="#c8c8c8"/></svg>
<div class="t" style="left:343px;top:585px;font-size:10px;color:#3f51b5">1</div>
<svg class="a" style="left:368px;top:585px" width="6" height="8" viewBox="0 0 6 8"><path d="M0 0v8l6-4z" fill="#c8c8c8"/></svg>
<svg class="a" style="left:393.5px;top:585px" width="8" height="8" viewBox="0 0 8 8"><path d="M6.7 0H8v8H6.7zM0 0v8l5.8-4z" fill="#c8c8c8"/></svg>
<div class="t" style="left:1254px;top:586px;font-size:9.3px;color:#8a8a8a">1 - 2 of 2 items</div>
<!-- action buttons -->
<div class="a btn" style="left:1033px;width:52px;background:#ffc007"></div>
<svg class="a" style="left:1044px;top:628px" width="14" height="11.5" viewBox="0 0 14 11.5"><g fill="#fff"><path d="M3.2 0h5.9l1.8 1.8v2H9.6V2.3L8.6 1.3H4.5v2.5H3.2z"/><path d="M1.1 3.8h11.8c.6 0 1.1.5 1.1 1.1v3.9h-2.3v2c0 .4-.3.7-.7.7H3c-.4 0-.7-.3-.7-.7v-2H0V4.9c0-.6.5-1.1 1.1-1.1zM3.6 7.2v3h6.8v-3z"/></g></svg>
<div class="t bt" style="left:1061.8px">In</div>
<div class="a btn" style="left:1090.5px;width:69.5px;background:#0070c0"></div>
<svg class="a" style="left:1100.8px;top:627.2px" width="11" height="11" viewBox="0 0 12 12"><path d="M4.3 0h3.4v4.3H12v3.4H7.7V12H4.3V7.7H0V4.3h4.3z" fill="#fff"/></svg>
<div class="t bt" style="left:1116px">Copy</div>
<div class="a btn" style="left:1165px;width:96.7px;background:#0070c0"></div>
<svg class="a" style="left:1175.5px;top:625.5px" width="15" height="14" viewBox="0 0 15 14"><path d="M10 1.6H2.6c-.9 0-1.6.7-1.6 1.6v8.2c0 .9.7 1.6 1.6 1.6h8.2c.9 0 1.6-.7 1.6-1.6V7.5" fill="none" stroke="#fff" stroke-width="1.6"/><path d="M12.6.2l2.2 2.2-6.6 6.6-3 .8.8-3z" fill="#fff"/></svg>
<div class="t bt" style="left:1193.6px">Cập nhật</div>
<div class="a btn" style="left:1266.3px;width:63.4px;background:#e74c3c"></div>
<svg class="a" style="left:1277.5px;top:629.2px" width="11" height="9.5" viewBox="0 0 11 9.5"><path d="M1.8 1.5l7.2 6.5M9 1.5L1.8 8" stroke="#fff" stroke-width="3" stroke-linecap="round"/></svg>
<div class="t bt" style="left:1292px">Hủy</div>
<!-- annotation -->
<div class="a" style="left:1087px;top:613px;width:78px;height:40px;border:4px solid #f00;border-radius:4px"></div>
<svg class="a" style="left:1100px;top:550px" width="40" height="60" viewBox="0 0 40 60"><path d="M20 8.5L21.6 31" stroke="#f00" stroke-width="4" stroke-linecap="round"/><path d="M8.2 31L33.2 30.3L22 54.6z" fill="#f00" stroke="#f00" stroke-width="2.2" stroke-linejoin="round"/></svg>
<div class="a" style="left:275px;top:408px;width:1055px;height:199px;border:1px solid #dedede"></div>
<!-- bottom row line -->
<div class="a" style="left:239px;top:677px;width:1101px;height:1px;background:#e6e6e6"></div>

<!-- scrollbar -->
<div class="a" style="left:1356px;top:69px;width:10px;height:615px;background:linear-gradient(90deg,#e2e2e2,#f2f2f2 25%,#f4f4f4 70%,#e6e6e6)"></div>
<div class="a" style="left:1356px;top:69px;width:10px;height:293px;background:linear-gradient(90deg,#555,#6c6c6c 30%,#6c6c6c 65%,#585858)"></div>
</body></html>
